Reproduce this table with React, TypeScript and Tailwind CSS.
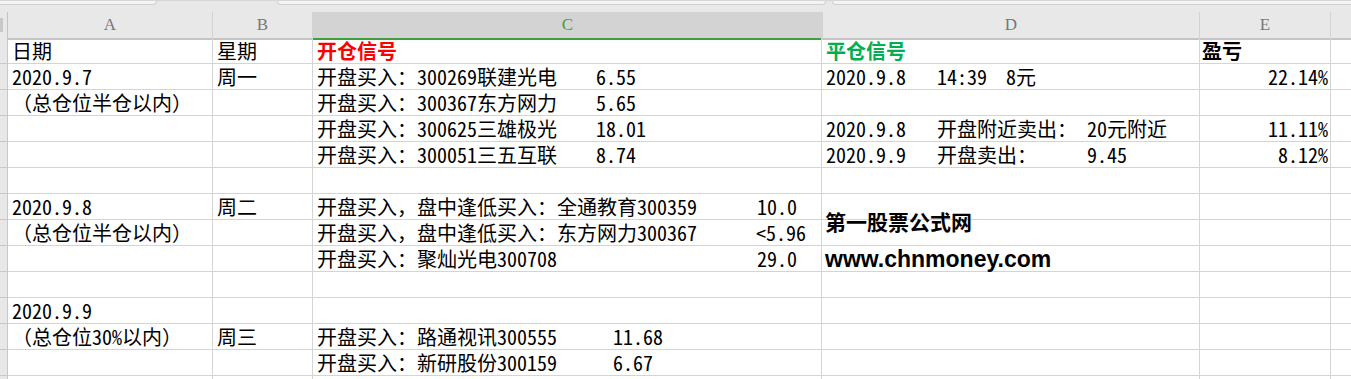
import React from 'react';

type Row = {
  a?: React.ReactNode;
  b?: React.ReactNode;
  c?: React.ReactNode;
  d?: React.ReactNode;
  e?: React.ReactNode;
};

const cellFont = "font-['Noto_Sans_Mono_CJK_SC','Noto_Sans_CJK_SC',sans-serif]";

function Buy({ label, value, w }: { label: string; value: string; w: string }) {
  return (
    <>
      <span className={`inline-block ${w}`}>{label}</span>
      <span>{value}</span>
    </>
  );
}

function Close({ date, what, value, w }: { date: string; what: string; value: string; w: string }) {
  return (
    <>
      <span className="inline-block w-[111px]">{date}</span>
      <span className={`inline-block ${w}`}>{what}</span>
      <span>{value}</span>
    </>
  );
}

const rows: Row[] = [
  {
    a: '日期',
    b: '星期',
    c: <span className="font-bold text-[#ff0000]">开仓信号</span>,
    d: <span className="font-bold text-[#00b050]">平仓信号</span>,
    e: <span className="block text-left pl-[2px] font-bold">盈亏</span>,
  },
  {
    a: '2020.9.7',
    b: '周一',
    c: <Buy label="开盘买入：300269联建光电" value="6.55" w="w-[279px]" />,
    d: <Close date="2020.9.8" what="14:39" value="8元" w="w-[69px]" />,
    e: '22.14%',
  },
  { a: '（总仓位半仓以内）', c: <Buy label="开盘买入：300367东方网力" value="5.65" w="w-[279px]" /> },
  {
    c: <Buy label="开盘买入：300625三雄极光" value="18.01" w="w-[279px]" />,
    d: <Close date="2020.9.8" what="开盘附近卖出：" value="20元附近" w="w-[150px]" />,
    e: '11.11%',
  },
  {
    c: <Buy label="开盘买入：300051三五互联" value="8.74" w="w-[279px]" />,
    d: <Close date="2020.9.9" what="开盘卖出：" value="9.45" w="w-[150px]" />,
    e: '8.12%',
  },
  {},
  { a: '2020.9.8', b: '周二', c: <Buy label="开盘买入，盘中逢低买入：全通教育300359" value="10.0" w="w-[440px]" /> },
  { a: '（总仓位半仓以内）', c: <Buy label="开盘买入，盘中逢低买入：东方网力300367" value="<5.96" w="w-[439px]" /> },
  { c: <Buy label="开盘买入：聚灿光电300708" value="29.0" w="w-[440px]" /> },
  {},
  { a: '2020.9.9' },
  { a: '（总仓位30%以内）', b: '周三', c: <Buy label="开盘买入：路通视讯300555" value="11.68" w="w-[296px]" /> },
  { c: <Buy label="开盘买入：新研股份300159" value="6.67" w="w-[296px]" /> },
  {},
];

const gridCols = 'grid grid-cols-[8px_205px_100px_509px_378px_131px_1fr]';

export default function App() {
  return (
    <div className="w-[1351px] h-[379px] overflow-hidden bg-white text-black">
      {/* toolbar edge */}
      <div className="h-[12px] bg-[#e8e8e8] border-t border-[#d6d6d6] flex items-start">
        <div className="w-[157px] h-[4px] bg-[#f4f4f4] border-b border-r border-[#cfcfcf] rounded-br-[4px]" />
        <div className="ml-[120px] w-[549px] h-[4px] bg-[#f4f4f4] border-b border-x border-[#cfcfcf] rounded-b-[4px]" />
        <div className="ml-[6px] flex-1 h-[4px] bg-[#f4f4f4] border-b border-l border-[#cfcfcf] rounded-bl-[4px]" />
      </div>

      {/* column letters */}
      <div className={`${gridCols} h-[26px] bg-[#e8e8e8] font-['Liberation_Serif',serif] text-[17px] text-[#777]`}>
        <div className="border-r border-b-2 border-[#c4c4c4] flex items-center">
          <div className="w-[3px] h-[14px] bg-[#c8c8c8]" />
        </div>
        <div className="border-r border-[#d2d2d2] border-b-2 border-b-[#c4c4c4] flex items-center justify-center">A</div>
        <div className="border-r border-[#d2d2d2] border-b-2 border-b-[#c4c4c4] flex items-center justify-center">B</div>
        <div className="bg-[#d3d3d3] border-b-2 border-[#3f9f3f] flex items-center justify-center text-[#3f9f3f]">C</div>
        <div className="border-r border-l border-[#d2d2d2] border-b-2 border-b-[#c4c4c4] flex items-center justify-center">D</div>
        <div className="border-r border-[#d2d2d2] border-b-2 border-b-[#c4c4c4] flex items-center justify-center">E</div>
        <div className="border-b-2 border-[#c4c4c4]" />
      </div>

      {/* sheet body */}
      <div className={`relative ${cellFont} text-[20px] leading-[25px] whitespace-pre`}>
        {rows.map((r, i) => (
          <div key={i} className={`${gridCols} h-[26px]`}>
            <div className="bg-[#e8e8e8] border-r border-b border-[#c8c8c8]" />
            <div className="border-r border-b border-[#d4d4d4] pl-[4px]">{r.a}</div>
            <div className="border-r border-b border-[#d4d4d4] pl-[4px]">{r.b}</div>
            <div className="border-r border-b border-[#d4d4d4] pl-[4px]">{r.c}</div>
            <div className="border-r border-b border-[#d4d4d4] pl-[4px]">{r.d}</div>
            <div className="border-r border-b border-[#d4d4d4] pr-[2px] text-right">{r.e}</div>
            <div className="border-b border-[#d4d4d4]" />
          </div>
        ))}

        {/* watermark over the sheet */}
        <div className="absolute left-[825px] top-[167px] font-['Noto_Sans_CJK_SC',sans-serif] font-bold text-[21px] leading-[32px]">
          第一股票公式网
        </div>
        <div className="absolute left-[825px] top-[205px] font-['Liberation_Sans',sans-serif] font-bold text-[23px] leading-[32px]">
          www.chnmoney.com
        </div>
      </div>
    </div>
  );
}
